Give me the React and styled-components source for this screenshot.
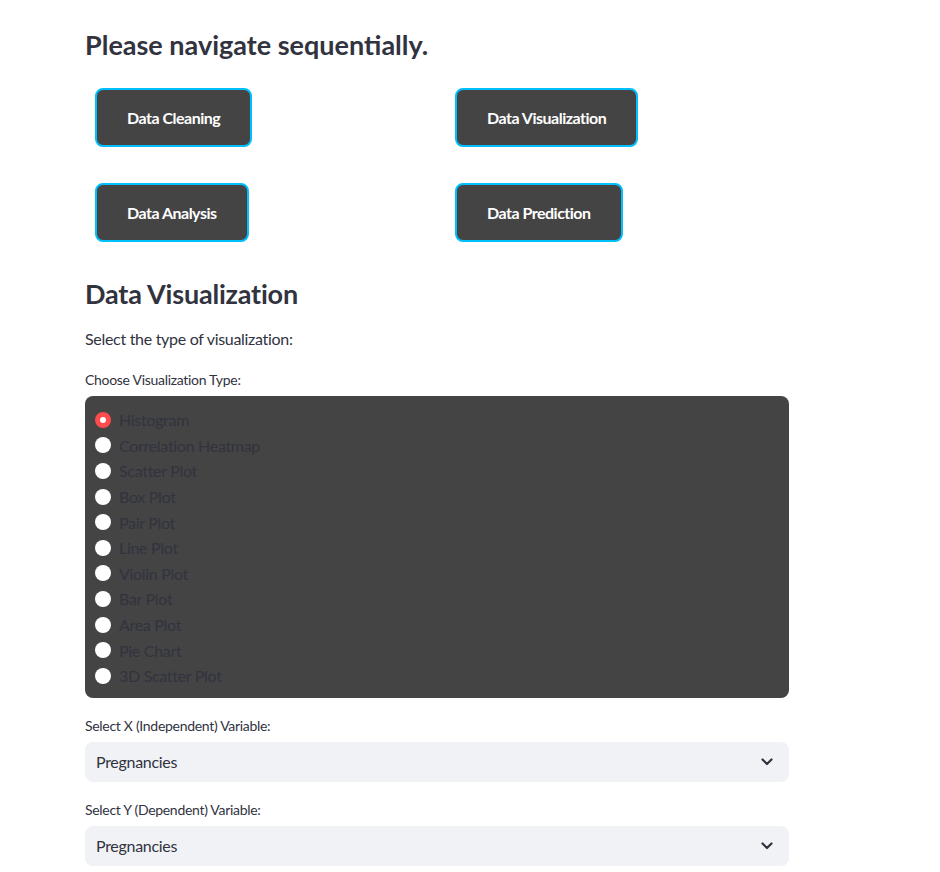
import React, { useState } from 'react';
import styled, { createGlobalStyle } from 'styled-components';

const GlobalStyle = createGlobalStyle`
  body {
    margin: 0;
    background: #ffffff;
    font-family: Lato, 'Noto Sans', sans-serif;
    color: #31333f;
    letter-spacing: -0.3px;
  }
`;

const Main = styled.div`
  width: 704px;
  margin-left: 85px;
  padding-top: 28px;
  display: flex;
  flex-direction: column;
`;

const Heading = styled.h2`
  margin: 0;
  font-size: 27px;
  font-weight: 700;
  line-height: 34px;
  letter-spacing: ${(props) => props.$ls || '0px'};
  color: #31333f;
  margin-top: ${(props) => props.top || '0px'};
`;

const Columns = styled.div`
  display: grid;
  grid-template-columns: 1fr 1fr;
  column-gap: 16px;
  margin-top: 26px;
`;

const Column = styled.div`
  display: flex;
  flex-direction: column;
  align-items: flex-start;
  gap: 36px;
  padding-left: 10px;
`;

const NavButton = styled.button`
  height: 59px;
  padding: 0 30px 1px;
  background: #444444;
  border: 2px solid #00bfff;
  border-radius: 8px;
  color: #ffffff;
  font-family: inherit;
  font-size: 16px;
  font-weight: 700;
  letter-spacing: -0.5px;
  cursor: pointer;
`;

const Text = styled.p`
  margin: 15px 0 0;
  font-size: 16px;
  line-height: 26px;
`;

const Label = styled.div`
  font-size: 14px;
  line-height: 22px;
  margin-top: ${(props) => props.top || '0px'};
  margin-bottom: 5px;
`;

const RadioBox = styled.div`
  background: #444444;
  border-radius: 8px;
  padding: 11px 10px 9px 10px;
  display: flex;
  flex-direction: column;
`;

const RadioRow = styled.label`
  display: flex;
  align-items: center;
  gap: 8px;
  height: 25.6px;
  font-size: 16px;
  color: #31333f;
  cursor: pointer;
`;

const Dot = styled.span`
  width: 16px;
  height: 16px;
  border-radius: 50%;
  box-sizing: border-box;
  background: #ffffff;
  border: ${(props) => (props.$on ? '5px solid #ff4b4b' : 'none')};
`;

const Select = styled.div`
  height: 40px;
  background: #f0f2f6;
  border-radius: 8px;
  display: flex;
  align-items: center;
  justify-content: space-between;
  padding: 0 16px 0 11px;
  font-size: 16px;
  color: #31333f;
`;

const plots = [
  'Histogram',
  'Correlation Heatmap',
  'Scatter Plot',
  'Box Plot',
  'Pair Plot',
  'Line Plot',
  'Violin Plot',
  'Bar Plot',
  'Area Plot',
  'Pie Chart',
  '3D Scatter Plot',
];

const Chevron = () => (
  <svg width="12" height="8" viewBox="0 0 12 8">
    <path d="M1.5 1.5 L6 6 L10.5 1.5" fill="none" stroke="#31333f" strokeWidth="2.2" strokeLinecap="round" strokeLinejoin="round" />
  </svg>
);

const App = () => {
  const [plot, setPlot] = useState('Histogram');
  return (
    <Main>
      <GlobalStyle />
      <Heading>Please navigate sequentially.</Heading>
      <Columns>
        <Column>
          <NavButton>Data Cleaning</NavButton>
          <NavButton>Data Analysis</NavButton>
        </Column>
        <Column>
          <NavButton>Data Visualization</NavButton>
          <NavButton>Data Prediction</NavButton>
        </Column>
      </Columns>
      <Heading top="35px" $ls="-0.2px">Data Visualization</Heading>
      <Text>Select the type of visualization:</Text>
      <Label top="17px">Choose Visualization Type:</Label>
      <RadioBox>
        {plots.map((p) => (
          <RadioRow key={p} onClick={() => setPlot(p)}>
            <Dot $on={plot === p} />
            {p}
          </RadioRow>
        ))}
      </RadioBox>
      <Label top="17px">Select X (Independent) Variable:</Label>
      <Select>
        Pregnancies
        <Chevron />
      </Select>
      <Label top="17px">Select Y (Dependent) Variable:</Label>
      <Select>
        Pregnancies
        <Chevron />
      </Select>
    </Main>
  );
};

export default App;
